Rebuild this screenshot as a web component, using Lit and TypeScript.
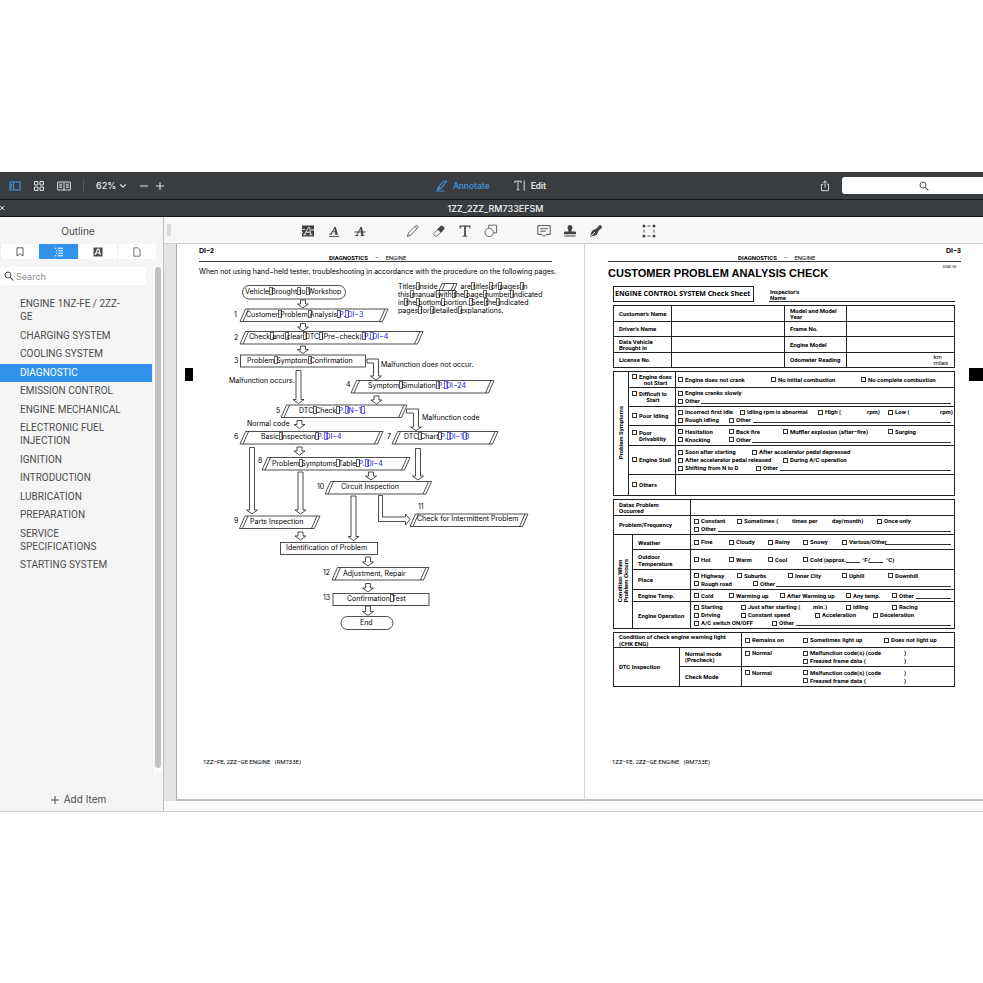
import { LitElement, html, svg, css, nothing } from "lit";
import { customElement, property, state } from "lit/decorators.js";
import { classMap } from "lit/directives/class-map.js";
import { styleMap } from "lit/directives/style-map.js";

/* ---------- icons ---------- */
const icon = (w: number, h: number, body: unknown) =>
  html`<svg width=${w} height=${h} viewBox="0 0 ${w} ${h}" fill="none" stroke="currentColor" aria-hidden="true">${body}</svg>`;

const icons = {
  sidebar: icon(12, 10, svg`<rect x="1" y="1" width="10" height="8" stroke-width="1.2"/><path d="M4.5 1v8"/><path d="M2.5 3v4" stroke-width="1"/>`),
  grid: icon(12, 12, svg`<path d="M1.5 1.5h3.4v3.4H1.5zM7 1.5h3.4v3.4H7zM1.5 7h3.4v3.4H1.5zM7 7h3.4v3.4H7z"/>`),
  book: icon(14, 10, svg`<path d="M.6 1h12.8v8H.6zM7 1v8.6M2.2 3.2h3M2.2 4.8h3M2.2 6.4h3M8.8 3.2h3M8.8 4.8h3M8.8 6.4h3" stroke-width=".9"/>`),
  chevron: icon(8, 6, svg`<path d="M1.2 1.4 4 4.2l2.8-2.8" stroke-width="1.2"/>`),
  minus: icon(10, 10, svg`<path d="M1 5h8"/>`),
  plus: icon(10, 10, svg`<path d="M1 5h8M5 1v8"/>`),
  annotate: icon(13, 12, svg`<path d="M3.2 7.4 8.6 1.2h3L6.2 8.4 2.6 9.6zM1 11h8.5M3.4 7.6l2.6.8" stroke-width="1.1"/>`),
  edit: icon(12, 11, svg`<path d="M.8 3V1.2h6.4V3M4 1.2v8.4M2.6 9.8h2.8M10.2.4v10.4" stroke-width=".9"/>`),
  share: icon(10, 12, svg`<path d="M3.2 4.3H1.4v6.4h7.2V4.3H6.8M5 7.5V1M3 2.8l2-2 2 2" stroke-width=".9"/>`),
  search: icon(10, 10, svg`<circle cx="4" cy="4" r="3"/><path d="m6.3 6.3 3 3" stroke-width="1.1"/>`),
  close: icon(6, 6, svg`<path d="m0 .8 4.4 4.4M4.4.8 0 5.2" stroke-width=".9"/>`),
  bookmark: icon(8, 10, svg`<path d="M1 .8h6v8.2L4 6.6 1 9z" stroke-width=".9"/>`),
  outline: icon(10, 10, svg`<path d="M.8 1.2h1.4M3.6 1.2H9M2 3.8h1.2M4.4 3.8H9M2 6.3h1.2M4.4 6.3H9M.8 8.8h1.4M3.6 8.8H9" stroke-width="1.1"/>`),
  marks: icon(10, 10, svg`<path d="M.5.5h9v9h-9z" fill="#4a4a4a" stroke="none"/><path d="m2 8 2.6-6h1.2l1.6 6M3.2 6h3.4" stroke="#fff" stroke-width="1.1"/>`),
  page: icon(8, 10, svg`<path d="M.9.8h4.2L7.1 3v6.2H.9z" stroke-width=".8"/>`),
  highlight: icon(14, 14, svg`<path d="M1 1.5h12v3.2l-.8.8.8.9v6.1H1V9.4l.8-.9L1 7.3z" fill="#3f3f3f" stroke="none"/><path d="m3.4 10.6 4-7h1.2l1.2 7M5 8.2h4.4M2.4 10.8h3M8.4 10.8h3M1 5.4h3M10 6h3" stroke="#f7f7f7" stroke-width=".9"/>`),
  underline: icon(14, 14, svg`<path d="M3.6 10.2 8 3.2l1.4 7M5 7.8h4.2M2.4 10.2h3M7.8 10.2h3.4" stroke-width="1"/><path d="M8 3.2 9.6 10" stroke-width="1.9"/><path d="M2 12.5h10" stroke-width=".9"/>`),
  strike: icon(14, 14, svg`<path d="M3.6 11.5 8 3.2l1.4 8.3M2.4 11.5h3M7.8 11.5h3.4" stroke-width="1"/><path d="M8 3.2 9.6 11.4" stroke-width="1.9"/><path d="M1.4 8h11.4" stroke-width="1"/>`),
  pencil: icon(14, 14, svg`<path d="M1.5 12.5l1-3.6L9.6 1.8q.9-.8 1.9.1.9 1 .1 1.9L4.8 11zM9 2.6l2 2.1" stroke-width=".8"/>`),
  eraser: icon(14, 14, svg`<path d="M2 9.5 8 2.8q1.8-1.6 3.4 0 1.5 1.6 0 3.2L5 12q-1.5.6-2.6-.4Q1.4 10.6 2 9.5z" stroke-width=".8"/><path d="M5.6 5.5 8.2 2.7q1.6-1.4 3.2 0 1.4 1.6 0 3.2L8.6 8.6z" fill="currentColor" stroke="none"/>`),
  text: icon(14, 14, svg`<path d="M2.2 4.6V2.2h9.6v2.4" stroke-width="1.2"/><path d="M7 2v10" stroke-width="1.7"/><path d="M4.7 12.2h4.6"/>`),
  shapes: icon(14, 14, svg`<path d="M4.8 4V1.2h7.8v7.6H9.6" stroke-width=".8"/><circle cx="5.2" cy="8.4" r="4.2" stroke-width=".8"/>`),
  note: icon(14, 14, svg`<path d="M.8 1.6h12.4v8.8H9l-2 2.2-2-2.2H.8zM3.2 4.7h7.6M3.2 7.2h5.6" stroke-width=".9"/>`),
  stamp: icon(14, 14, svg`<path d="M7 1a2.5 2.5 0 0 1 2.3 3.5C8.6 6 8.4 6.8 8.6 7.5h3.6q.8 0 .8.8v1.9H1V8.3q0-.8.8-.8h3.6c.2-.7 0-1.5-.7-3A2.5 2.5 0 0 1 7 1zM1.4 11.4h11.2v1.2H1.4z" fill="currentColor" stroke="none"/>`),
  pen: icon(14, 14, svg`<path d="M1 13 3 6.8l4.8-2.6L10 1.4q1-1 2.3.3 1.4 1.3.4 2.3L9.8 6.6 7.6 11z" fill="currentColor" stroke="none"/><path d="M1.6 12.4 6 8" stroke="#f7f7f7" stroke-width=".9"/>`),
  select: icon(14, 14, svg`<path d="M5.5 2h3M5.5 12h3M2 5.5v3M12 5.5v3" stroke-width=".9"/><g fill="currentColor" stroke="none"><circle cx="2" cy="2" r="1.5"/><circle cx="12" cy="2" r="1.5"/><circle cx="2" cy="12" r="1.5"/><circle cx="12" cy="12" r="1.5"/></g>`),
};

/* ---------- flow chart data (page canvas units) ---------- */
const ORIGIN = { x: 177, y: 276 };

type Label = [x: number, y: number, text: string, link?: string];
const labels: Label[] = [
  [245, 292, "Vehicle_Brought_to_Workshop"],
  [246, 315, "Customer_Problem_Analysis_", "P._DI−3"],
  [249, 337, "Check_and_clear_DTC_(Pre−check)_", "P._DI−4"],
  [247, 361, "Problem_Symptom_Confirmation"],
  [229, 381, "Malfunction occurs."],
  [381, 365, "Malfunction does not occur."],
  [368, 386, "Symptom_Simulation_", "P._DI−24"],
  [299, 411, "DTC_Check_", "P._IN−1_."],
  [247, 424, "Normal code"],
  [422, 418, "Malfunction code"],
  [261, 437, "Basic_Inspection_", "P._DI−4"],
  [404, 437, "DTC_Chart_", "P._DI−1_8"],
  [272, 464, "Problem_Symptoms_Table_", "P._DI−4"],
  [341, 487, "Circuit Inspection"],
  [250, 522, "Parts Inspection"],
  [417, 519, "Check for Intermittent Problem"],
  [286, 548, "Identification of Problem"],
  [343, 574, "Adjustment, Repair"],
  [347, 599, "Confirmation_Test"],
  [360, 623, "End"],
  [234, 315, "1"], [234, 338, "2"], [234, 361, "3"], [346, 385, "4"], [276, 411, "5"],
  [234, 437, "6"], [387, 437, "7"], [258, 461, "8"], [234, 521, "9"], [317, 487, "10"],
  [418, 507, "11"], [323, 573, "12"], [323, 598, "13"],
];
/* left, right, top of each slanted box */
const slanted = [
  [240, 388, 309], [240, 423, 331.5], [351, 494, 380.5], [281, 407, 405], [240, 383, 431.5],
  [392, 498, 431.5], [262, 410, 457.5], [325, 431.5, 481.5], [239.5, 320, 516], [410, 528, 514],
  [332, 429, 567.5],
];
/* left, top, width, height, corner radius */
const boxes = [
  [242.5, 285.5, 103, 13.5, 6.7], [240.5, 355, 125, 12, 0], [280.5, 542.5, 97, 12, 0],
  [333, 593.5, 96, 12, 0], [341, 616.5, 52, 13, 6.5],
];
/* centre, stem top, tip */
const arrows = [
  [303, 300, 308], [303, 323.5, 331], [303, 346, 353.5], [376.5, 396, 404], [299.5, 420.5, 428.5],
  [299.5, 447, 455], [371, 472, 480], [300.5, 532, 540], [368, 557, 566], [368, 583.5, 592],
  [368, 606, 615.5], [298.5, 370.5, 403.5], [252, 447.5, 514], [300.5, 472, 514], [418, 448.5, 480],
  [353.5, 496, 540.5],
];
const bends = [
  "M367 359H378.5V376H381.5L376 380 370.5 376H373.5V363H367Z",
  "M406.5 409H418.5V427H421.5L416 430.5 410.5 427H413.5V413H406.5Z",
  "M378.5 495.5H382.5V517H405.5V514L410 519.5 405.5 525V521.5H378.5Z",
];
const slant = (l: number, r: number, t: number, h = 12.5, s = 5.5) =>
  `M${l} ${t + h}L${l + s} ${t}H${r}L${r - s} ${t + h}ZM${l + 3} ${t + h}l${s} ${-h}M${r - 3} ${t}l${-s} ${h}`;
const arrow = (c: number, t: number, b: number) =>
  `M${c - 2.5} ${t}H${c + 2.5}V${b - 4}H${c + 5.5}L${c} ${b} ${c - 5.5} ${b - 4}H${c - 2.5}Z`;

const gapped = (t: string) =>
  t.split("_").map((part, i) => html`${i ? html`<span class="gap"> </span>` : nothing}${part}`);

/* ---------- check sheet data ---------- */
type Seg = ["c" | "t", number, string] | ["r", number, number];
type Line = Seg[];
const c = (x: number, t: string): Seg => ["c", x, t];
const t = (x: number, s: string): Seg => ["t", x, s];
const r = (x: number, end = 951): Seg => ["r", x, end];

interface Symptom { h: number; name: string[]; mid?: boolean; lines: Line[] }
const symptoms: Symptom[] = [
  { h: 16, name: ["Engine does", "not Start"], mid: true, lines: [[c(678, "Engine does not crank"), c(771, "No initial combustion"), c(861, "No complete combustion")]] },
  { h: 19, name: ["Difficult to", "Start"], mid: true, lines: [[c(678, "Engine cranks slowly")], [c(678, "Other"), r(701)]] },
  { h: 19, name: ["Poor Idling"], lines: [
    [c(678, "Incorrect first idle"), c(740, "Idling rpm is abnormal"), c(818, "High ("), t(867, "rpm)"), c(888, "Low ("), t(940, "rpm)")],
    [c(678, "Rough idling"), c(729, "Other"), r(753)]] },
  { h: 20, name: ["Poor", "Drivability"], lines: [
    [c(678, "Hesitation"), c(729, "Back fire"), c(783, "Muffler explosion (after−fire)"), c(888, "Surging")],
    [c(678, "Knocking"), c(729, "Other"), r(752)]] },
  { h: 29, name: ["Engine Stall"], lines: [
    [c(678, "Soon after starting"), c(752, "After accelerator pedal depressed")],
    [c(678, "After accelerator pedal released"), c(783, "During A/C operation")],
    [c(678, "Shifting from N to D"), c(756, "Other"), r(780)]] },
  { h: 21, name: ["Others"], lines: [] },
];
interface Condition { h: number; name: string; lines: Line[] }
const conditions: Condition[] = [
  { h: 15, name: "Weather", lines: [[c(694, "Fine"), c(729, "Cloudy"), c(768, "Rainy"), c(803, "Snowy"), c(842, "Various/Other"), r(885)]] },
  { h: 20, name: "Outdoor Temperature", lines: [[c(694, "Hot"), c(729, "Warm"), c(768, "Cool"), c(803, "Cold (approx."), r(846, 860), t(862, "°F/"), r(869, 883), t(886, "°C)")]] },
  { h: 20, name: "Place", lines: [
    [c(694, "Highway"), c(737, "Suburbs"), c(788, "Inner City"), c(842, "Uphill"), c(888, "Downhill")],
    [c(694, "Rough road"), c(753, "Other"), r(776)]] },
  { h: 12, name: "Engine Temp.", lines: [[c(694, "Cold"), c(729, "Warming up"), c(780, "After Warming up"), c(846, "Any temp."), c(892, "Other"), r(916)]] },
  { h: 27, name: "Engine Operation", lines: [
    [c(694, "Starting"), c(741, "Just after starting ("), t(813, "min.)"), c(846, "Idling"), c(892, "Racing")],
    [c(694, "Driving"), c(741, "Constant speed"), c(815, "Acceleration"), c(873, "Deceleration")],
    [c(694, "A/C switch ON/OFF"), c(772, "Other"), r(796)]] },
];
const dtc: Line[] = [
  [c(745, "Normal"), c(803, "Malfunction code(s) (code"), t(904, ")")],
  [c(803, "Freezed frame data ("), t(904, ")")],
];

const renderLine = (line: Line, start: number) => html`<div class="line">
  ${line.map((seg, i) => {
    const prev = line[i - 1];
    const next = line[i + 1];
    const from = !prev ? start : prev[0] === "r" ? (prev[2] as number) : seg[1];
    const width = seg[0] === "r" ? (seg[2] as number) - seg[1] : next ? next[1] - seg[1] : 0;
    const style = styleMap({ marginLeft: `${seg[1] - from}px`, width: width ? `${width}px` : "auto" });
    if (seg[0] === "r") return html`<span class="rule" style=${style}></span>`;
    if (seg[0] === "t") return html`<span class="seg" style=${style}>${seg[2]}</span>`;
    return html`<label class="seg" style=${style}><input type="checkbox" />${seg[2]}</label>`;
  })}
</div>`;
const renderLines = (lines: Line[], start: number) => lines.map((l) => renderLine(l, start));
const rowHeight = (h: number) => styleMap({ height: `${h}px` });

/* ---------- manual page: diagnostic flow ---------- */
const pageStyles = css`
  :host { display: flex; flex-direction: column; position: relative; background: #fff; color: #000; min-height: 555px; box-sizing: border-box; font: 7px/8px Inter, sans-serif; }
  .folio { font: 700 7px/11px "Liberation Sans", sans-serif; padding-top: 1px; box-sizing: border-box; height: 11px; }
  .running { display: flex; gap: 7px; font: 400 6px/6px Roboto, sans-serif; border-bottom: 1px solid #333; padding: 0 0 0 130px; }
  .running b { font-weight: 700; }
  .foot { margin: auto 0 33px; font: 6px/8px Roboto, sans-serif; display: flex; gap: 4px; }
  .mark { position: absolute; top: 124px; height: 13px; background: #000; }
`;

@customElement("flow-page")
class FlowPage extends LitElement {
  static styles = [pageStyles, css`
    .head { margin: 0 32px 0 22px; }
    .intro { margin: 6px 32px 0 22px; white-space: nowrap; }
    .foot { margin-left: 26px; }
    .mark { left: 8px; width: 8px; }
    .chart { position: relative; height: 364px; }
    svg { display: block; fill: #fff; stroke: #222; stroke-width: .8; }
    .label { position: absolute; white-space: pre; }
    .label a { color: #1010e0; text-decoration: none; }
    .gap { position: relative; }
    .gap::after { content: ""; position: absolute; left: 0; top: 0; width: 4px; height: 8px; box-sizing: border-box; border: 1px solid currentColor; opacity: .6; }
    .note { position: absolute; left: 221px; top: 7px; white-space: pre; }
    .slot { display: inline-block; width: 19px; }
  `];
  render() {
    return html`
      <header class="head">
        <div class="folio">DI−2</div>
        <div class="running"><b>DIAGNOSTICS</b><span>−</span><span>ENGINE</span></div>
      </header>
      <div class="intro">When not using hand−held tester, troubleshooting in accordance with the procedure on the following pages.</div>
      <div class="mark"></div>
      <div class="chart">
        <svg width="408" height="364" viewBox="${ORIGIN.x} ${ORIGIN.y} 408 364">
          ${arrows.map(([x, a, b]) => svg`<path d=${arrow(x, a, b)}/>`)}
          ${bends.map((d) => svg`<path d=${d}/>`)}
          ${slanted.map(([l, rr, y]) => svg`<path d=${slant(l, rr, y)}/>`)}
          ${boxes.map(([x, y, w, h, rx]) => svg`<rect x=${x} y=${y} width=${w} height=${h} rx=${rx}/>`)}
          <path d=${slant(439, 457, 283.5, 7, 3)} />
        </svg>
        <div class="note">${gapped("Titles_inside")} <span class="slot"></span> ${gapped("are_titles_of_pages_in")}
${gapped("this_manual_with_the_page_number_indicated")}
${gapped("in_the_bottom_portion._See_the_indicated")}
${gapped("pages_for_detailed_explanations.")}</div>
        ${labels.map(([x, y, text, link]) => html`<div class="label" style=${styleMap({ left: `${x - ORIGIN.x}px`, top: `${y - ORIGIN.y - 4}px` })}>${gapped(text)}${link ? html`<a href="#${link}">${gapped(link)}</a>` : nothing}</div>`)}
      </div>
      <footer class="foot"><span>1ZZ−FE, 2ZZ−GE ENGINE</span><span>(RM733E)</span></footer>`;
  }
}

/* ---------- manual page: customer check sheet ---------- */
@customElement("check-page")
class CheckPage extends LitElement {
  static styles = [pageStyles, css`
    .head { margin: 0 22px 0 23px; }
    .folio { text-align: right; }
    .code { position: absolute; right: 27px; top: 21px; font: 3px/4px Roboto, sans-serif; }
    .foot { margin-left: 27px; }
    .mark { right: 0; width: 14px; }
    h1 { margin: 4px 0 6px 23px; font: 700 11px/14px "Liberation Sans", sans-serif; white-space: nowrap; }
    .sheet { margin: 0 28px 0 28px; font: 700 6px/8px Roboto, sans-serif; display: flex; flex-direction: column; gap: 3px; }
    .top { display: flex; justify-content: space-between; height: 16px; }
    .name { box-sizing: border-box; width: 141px; border: 1px solid #222; padding-left: 1px; font: 700 7px/14px "Open Sans", sans-serif; white-space: nowrap; }
    .inspector { box-sizing: border-box; width: 186px; border-bottom: 1px solid #222; padding: 3px 1px; line-height: 6px; }
    table { border-collapse: collapse; table-layout: fixed; width: 100%; }
    th, td { border: 1px solid #222; padding: 0; font-weight: 700; text-align: left; vertical-align: middle; line-height: 6px; }
    th { padding-left: 5px; }
    th.pick { padding-left: 3px; }
    th.loose { line-height: 7px; }
    th.side { padding: 0; text-align: center; }
    .turn { writing-mode: vertical-rl; transform: rotate(180deg); display: inline-block; white-space: nowrap; }
    .unit { text-align: right; padding-right: 6px; font-weight: 400; }
    .unit span { display: inline-block; text-align: left; }
    .line { display: flex; height: 8px; line-height: 8px; white-space: nowrap; }
    .seg { flex: none; display: flex; align-items: center; gap: 2px; }
    .rule { flex: none; box-sizing: border-box; height: 7px; border-bottom: 1px solid #333; }
    .pick label { display: flex; gap: 2px; white-space: nowrap; }
    .pick .mid { text-align: center; }
    input { appearance: none; flex: none; box-sizing: border-box; margin: 0; width: 5px; height: 5px; border: 1px solid #333; background: #fff; }
    input:checked { background: #222; }
    .w15 { width: 15px; } .w19 { width: 19px; } .w47 { width: 47px; } .w58 { width: 58px; }
    .w62 { width: 62px; } .w66 { width: 66px; } .w113 { width: 113px; }
  `];
  render() {
    const vehicle = [
      [["Customer's Name"], ["Model and Model", "Year"]],
      [["Driver's Name"], ["Frame No."]],
      [["Data Vehicle", "Brought in"], ["Engine Model"]],
      [["License No."], ["Odometer Reading"]],
    ];
    const stack = (parts: string[]) => parts.map((p, i) => html`${i ? html`<br />` : nothing}${p}`);
    return html`
      <header class="head">
        <div class="folio">DI−3</div>
        <div class="running"><b>DIAGNOSTICS</b><span>−</span><span>ENGINE</span></div>
      </header>
      <div class="code">DI04K−08</div>
      <div class="mark"></div>
      <h1>CUSTOMER PROBLEM ANALYSIS CHECK</h1>
      <div class="sheet">
        <div class="top"><div class="name">ENGINE CONTROL SYSTEM Check Sheet</div><div class="inspector">Inspector's<br />Name</div></div>
        <table>
          <colgroup><col class="w58" /><col class="w113" /><col class="w62" /><col /></colgroup>
          ${vehicle.map(([a, b], i) => html`<tr style=${rowHeight(i % 2 ? 15 : 16)}>
            <th>${stack(a)}</th><td></td><th>${stack(b)}</th>
            <td class=${classMap({ unit: i === 3 })}>${i === 3 ? html`<span>km<br />miles</span>` : nothing}</td></tr>`)}
        </table>
        <table>
          <colgroup><col class="w15" /><col class="w47" /><col /></colgroup>
          ${symptoms.map((s, i) => html`<tr style=${rowHeight(s.h)}>
            ${i ? nothing : html`<th class="side" rowspan="6"><span class="turn">Problem Symptoms</span></th>`}
            <th class="pick"><label><input type="checkbox" /><span class=${classMap({ mid: !!s.mid })}>${stack(s.name)}</span></label></th>
            <td>${renderLines(s.lines, 676)}</td></tr>`)}
        </table>
        <table>
          <colgroup><col class="w19" /><col class="w58" /><col /></colgroup>
          <tr style=${rowHeight(16)}><th colspan="2">Datas Problem<br />Occurred</th><td></td></tr>
          <tr style=${rowHeight(19)}><th colspan="2">Problem/Frequency</th><td>${renderLines([
            [c(694, "Constant"), c(737, "Sometimes ("), t(792, "times per"), t(832, "day/month)"), c(877, "Once only")],
            [c(694, "Other"), r(718)]], 691)}</td></tr>
          ${conditions.map((s, i) => html`<tr style=${rowHeight(s.h)}>
            ${i ? nothing : html`<th class="side" rowspan="5"><span class="turn">Condition When<br />Problem Occurs</span></th>`}
            <th class="loose">${s.name}</th><td>${renderLines(s.lines, 691)}</td></tr>`)}
        </table>
        <table>
          <colgroup><col class="w66" /><col class="w62" /><col /></colgroup>
          <tr style=${rowHeight(15)}><th class="loose" colspan="2">Condition of check engine warning light<br />(CHK ENG)</th>
            <td>${renderLine([c(745, "Remains on"), c(803, "Sometimes light up"), c(884, "Does not light up")], 742)}</td></tr>
          <tr style=${rowHeight(19)}><th rowspan="2">DTC Inspection</th><th>Normal mode<br />(Precheck)</th><td>${renderLines(dtc, 742)}</td></tr>
          <tr style=${rowHeight(20)}><th>Check Mode</th><td>${renderLines(dtc, 742)}</td></tr>
        </table>
      </div>
      <footer class="foot"><span>1ZZ−FE, 2ZZ−GE ENGINE</span><span>(RM733E)</span></footer>`;
  }
}

/* ---------- sidebar ---------- */
@customElement("outline-panel")
class OutlinePanel extends LitElement {
  @state() private selected = 3;
  private items = ["ENGINE 1NZ-FE / 2ZZ-GE", "CHARGING SYSTEM", "COOLING SYSTEM", "DIAGNOSTIC", "EMISSION CONTROL",
    "ENGINE MECHANICAL", "ELECTRONIC FUEL INJECTION", "IGNITION", "INTRODUCTION", "LUBRICATION", "PREPARATION",
    "SERVICE SPECIFICATIONS", "STARTING SYSTEM"];
  static styles = css`
    :host { display: flex; flex-direction: column; box-sizing: border-box; min-width: 0; background: #f5f5f5; border-right: 1px solid #bdbdbd; color: #4c4c4c; font: 10px/13px Roboto, sans-serif; }
    svg { display: block; flex: none; }
    button, input { font: inherit; color: inherit; border: 0; background: none; padding: 0; margin: 0; }
    h2 { margin: 8px 7px 6px 0; font: 400 10px/13px Inter, sans-serif; text-align: center; }
    .tabs { display: flex; margin: 0 7px 0 0; height: 15px; background: #fff; border-radius: 3px; }
    .tabs button { flex: 1; display: flex; align-items: center; justify-content: center; border-left: 1px solid #eee; }
    .tabs button.on { background: #3192ec; color: #fff; border-color: #3192ec; }
    .body { flex: 1; display: grid; grid-template-columns: minmax(0, 1fr) 11px; margin-top: 8px; }
    .find { display: flex; align-items: center; gap: 2px; height: 18px; margin: 0 6px 10px 0; padding-left: 4px; background: #fff; border-radius: 3px; }
    .find input { flex: 1; min-width: 0; outline: 0; font: 9px/13px Inter, sans-serif; }
    .find input::placeholder { color: #8e8e8e; opacity: 1; }
    ul { list-style: none; margin: 0; padding: 0; height: 279px; display: flex; flex-direction: column; justify-content: space-between; }
    li button { display: block; width: 100%; text-align: left; padding: 2px 24px 3px 20px; }
    li button.on { background: #3192ec; color: #fff; }
    .bar { background: #fafafa; border-left: 1px solid #eee; margin-bottom: 20px; }
    .thumb { margin: 0 2px 0 2px; height: 501px; border-radius: 3px; background: #c1c1c1; }
    .add { display: flex; align-items: center; gap: 4px; align-self: center; margin: 0 7px 5px 0; font: 10px/13px Inter, sans-serif; }
  `;
  render() {
    return html`
      <h2>Outline</h2>
      <div class="tabs">
        <button aria-label="Bookmarks">${icons.bookmark}</button><button class="on" aria-label="Outline">${icons.outline}</button>
        <button aria-label="Annotations">${icons.marks}</button><button aria-label="Pages">${icons.page}</button>
      </div>
      <div class="body">
        <div>
          <label class="find">${icons.search}<input type="search" placeholder="Search" aria-label="Search outline" /></label>
          <ul>${this.items.map((name, i) => html`<li><button class=${classMap({ on: i === this.selected })} @click=${() => (this.selected = i)}>${name}</button></li>`)}</ul>
        </div>
        <div class="bar"><div class="thumb"></div></div>
      </div>
      <button class="add">${icons.plus}Add Item</button>`;
  }
}

/* ---------- application window ---------- */
@customElement("app-root")
class AppRoot extends LitElement {
  @property() document = "1ZZ_2ZZ_RM733EFSM";
  static styles = css`
    :host { display: block; background: #fff; padding-top: 172px; min-height: 100vh; box-sizing: border-box; overflow: hidden; font: 500 9px/12px Roboto, sans-serif; }
    svg { display: block; }
    button, select, input { font: inherit; color: inherit; border: 0; background: none; padding: 0; margin: 0; }
    .toolbar { display: grid; grid-template-columns: 1fr auto 1fr; align-items: center; height: 27px; background: #3a3d40; color: #e6e6e6; border-bottom: 1px solid #141516; }
    .group { display: flex; align-items: center; }
    .views { gap: 12px; padding-left: 9px; }
    .views .on, .mode.on { color: #3f8fdc; }
    .sep { width: 1px; height: 14px; background: #56595c; }
    .zoom { display: flex; align-items: center; gap: 2px; font-family: Inter, sans-serif; }
    .zoom select { appearance: none; width: 21px; outline: 0; }
    .step { margin-right: -6px; }
    .modes { gap: 24px; padding-right: 2px; }
    .mode { display: flex; align-items: center; gap: 5px; }
    .right { justify-content: flex-end; gap: 12px; }
    .lookup { display: flex; align-items: center; width: 141px; height: 17px; background: #fff; border-radius: 3px 0 0 3px; color: #555; position: relative; }
    .lookup input { flex: 1; min-width: 0; height: 100%; outline: 0; }
    .lookup svg { position: absolute; left: 77px; }
    .tabbar { display: flex; align-items: center; height: 16px; background: #3a3d40; color: #f0f0f0; border-bottom: 1px solid #141516; }
    .tabbar button { width: 8px; }
    .title { flex: 1; text-align: center; font: 500 9px/14px Inter, sans-serif; padding-top: 2px; }
    .work { display: grid; grid-template-columns: 164px minmax(0, 1fr); min-height: 594px; border-bottom: 1px solid #c9c9c9; }
    .main { display: flex; flex-direction: column; background: #fafafa; }
    .tools { display: flex; align-items: center; height: 26px; background: #f7f7f7; border-bottom: 1px solid #cfcfcf; color: #444; padding-left: 3px; gap: 39px; }
    .tools .group { gap: 12px; padding-top: 1px; }
    .grip { width: 4px; height: 12px; background: #dadada; margin-right: 91px; }
    .pages { display: grid; grid-template-columns: 408px minmax(0, 1fr); padding-left: 12px; background: #e4e4e4; }
    flow-page { border-left: 1px solid #a8a8a8; border-bottom: 2px solid #c0c0c0; }
    check-page { border-left: 1px solid #d6d6d6; border-bottom: 2px solid #c0c0c0; }
    .pages > * { min-height: 557px; }
  `;
  render() {
    const tool = (name: keyof typeof icons) => html`<button aria-label=${name}>${icons[name]}</button>`;
    return html`
      <header class="toolbar">
        <div class="group views">
          <button class="on" aria-label="Sidebar">${icons.sidebar}</button>
          <button aria-label="Thumbnails">${icons.grid}</button>
          <button aria-label="Two pages">${icons.book}</button>
          <span class="sep"></span>
          <label class="zoom"><select aria-label="Zoom"><option>62%</option></select>${icons.chevron}</label>
          <button class="step" aria-label="Zoom out">${icons.minus}</button>
          <button class="step" aria-label="Zoom in">${icons.plus}</button>
        </div>
        <div class="group modes">
          <button class="mode on">${icons.annotate}Annotate</button>
          <button class="mode">${icons.edit}Edit</button>
        </div>
        <div class="group right">
          <button aria-label="Share">${icons.share}</button>
          <label class="lookup">${icons.search}<input type="search" aria-label="Search document" /></label>
        </div>
      </header>
      <div class="tabbar"><button aria-label="Close tab">${icons.close}</button><div class="title">${this.document}</div></div>
      <div class="work">
        <outline-panel></outline-panel>
        <div class="main">
          <div class="tools">
            <span class="grip"></span>
            <div class="group">${tool("highlight")}${tool("underline")}${tool("strike")}</div>
            <div class="group">${tool("pencil")}${tool("eraser")}${tool("text")}${tool("shapes")}</div>
            <div class="group">${tool("note")}${tool("stamp")}${tool("pen")}</div>
            <div class="group">${tool("select")}</div>
          </div>
          <div class="pages"><flow-page></flow-page><check-page></check-page></div>
        </div>
      </div>`;
  }
}
